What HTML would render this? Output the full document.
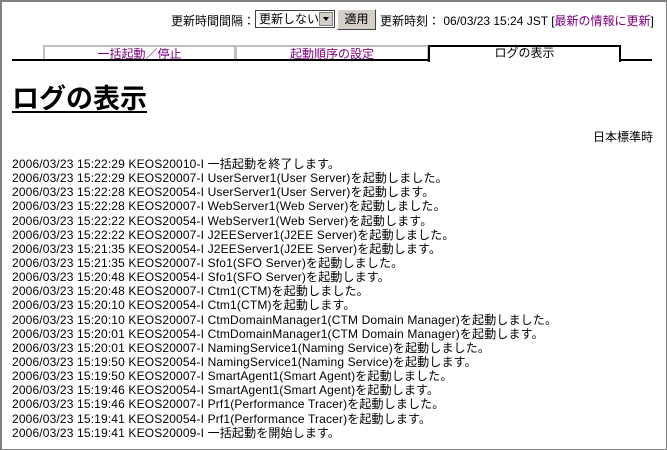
<!DOCTYPE html>
<html><head><meta charset="utf-8"><style>
body{margin:0;width:667px;height:450px;overflow:hidden;background:#fff;font-family:"Liberation Sans","Noto Sans CJK JP",sans-serif;font-size:12px;color:#000}
.frame{position:absolute;left:0;top:0;width:664px;height:447px;border-left:2px solid #808080;border-top:2px solid #808080;border-right:1px solid #808080;border-bottom:1px solid #808080}
.a{position:absolute;white-space:nowrap}
.lk{color:#800080}
.sel{position:absolute;left:255px;top:10px;width:80px;height:18px;border:1px solid #404040;box-sizing:border-box;background:#fff;font-size:12px;line-height:16px;padding-left:3px}
.sel .ar{position:absolute;right:1px;top:1px;width:14px;height:14px;background:#d4d0c8;border:1px solid #808080;box-sizing:border-box}
.sel .ar:after{content:"";position:absolute;left:3px;top:4px;border-left:3px solid transparent;border-right:3px solid transparent;border-top:4px solid #000}
.btn{position:absolute;left:337px;top:9px;width:39px;height:21px;background:#d4d0c8;border:1px solid;border-color:#fff #404040 #404040 #fff;box-sizing:border-box;text-align:center;line-height:19px;font-size:12px}
.tab{position:absolute;top:45px;height:15px;text-align:center;font-size:12px;line-height:15px;box-sizing:border-box}
.log{position:absolute;left:12px;top:157px;font-size:12px;letter-spacing:0.15px}
.log div{height:14.15px;line-height:14.15px;white-space:pre;overflow:visible}
</style></head><body>
<div class="frame"></div>
<div class="a" style="left:171px;top:12px">更新時間間隔：</div>
<div class="sel">更新しない<span class="ar"></span></div>
<div class="btn">適用</div>
<div class="a" style="left:380px;top:12px">更新時刻： 06/03/23 15:24 JST [<span class="lk">最新の情報に更新</span>]</div>
<div class="tab lk" style="left:43px;width:193px;border:2px solid #c0c0c0;border-bottom:none">一括起動／停止</div>
<div class="tab lk" style="left:235px;width:194px;border:2px solid #c0c0c0;border-bottom:none">起動順序の設定</div>
<div style="position:absolute;left:12px;top:59px;width:416px;height:2px;background:#000"></div>
<div class="tab" style="left:428px;width:193px;height:17px;border:2px solid #000;border-bottom:none;background:#fff;line-height:13px">ログの表示</div>
<div style="position:absolute;left:619px;top:59px;width:33px;height:2px;background:#000"></div>
<div class="a" style="left:12px;top:77px;font-size:27px;font-weight:bold;text-decoration:underline;text-decoration-thickness:2px;text-underline-offset:3px">ログの表示</div>
<div class="a" style="right:14px;top:128px">日本標準時</div>
<div class="log">
<div>2006/03/23 15:22:29 KEOS20010-I 一括起動を終了します。</div>
<div>2006/03/23 15:22:29 KEOS20007-I UserServer1(User Server)を起動しました。</div>
<div>2006/03/23 15:22:28 KEOS20054-I UserServer1(User Server)を起動します。</div>
<div>2006/03/23 15:22:28 KEOS20007-I WebServer1(Web Server)を起動しました。</div>
<div>2006/03/23 15:22:22 KEOS20054-I WebServer1(Web Server)を起動します。</div>
<div>2006/03/23 15:22:22 KEOS20007-I J2EEServer1(J2EE Server)を起動しました。</div>
<div>2006/03/23 15:21:35 KEOS20054-I J2EEServer1(J2EE Server)を起動します。</div>
<div>2006/03/23 15:21:35 KEOS20007-I Sfo1(SFO Server)を起動しました。</div>
<div>2006/03/23 15:20:48 KEOS20054-I Sfo1(SFO Server)を起動します。</div>
<div>2006/03/23 15:20:48 KEOS20007-I Ctm1(CTM)を起動しました。</div>
<div>2006/03/23 15:20:10 KEOS20054-I Ctm1(CTM)を起動します。</div>
<div>2006/03/23 15:20:10 KEOS20007-I CtmDomainManager1(CTM Domain Manager)を起動しました。</div>
<div>2006/03/23 15:20:01 KEOS20054-I CtmDomainManager1(CTM Domain Manager)を起動します。</div>
<div>2006/03/23 15:20:01 KEOS20007-I NamingService1(Naming Service)を起動しました。</div>
<div>2006/03/23 15:19:50 KEOS20054-I NamingService1(Naming Service)を起動します。</div>
<div>2006/03/23 15:19:50 KEOS20007-I SmartAgent1(Smart Agent)を起動しました。</div>
<div>2006/03/23 15:19:46 KEOS20054-I SmartAgent1(Smart Agent)を起動します。</div>
<div>2006/03/23 15:19:46 KEOS20007-I Prf1(Performance Tracer)を起動しました。</div>
<div>2006/03/23 15:19:41 KEOS20054-I Prf1(Performance Tracer)を起動します。</div>
<div>2006/03/23 15:19:41 KEOS20009-I 一括起動を開始します。</div>
</div>
</body></html>
